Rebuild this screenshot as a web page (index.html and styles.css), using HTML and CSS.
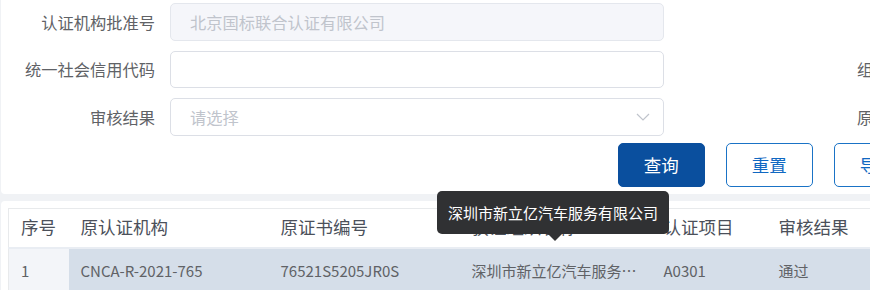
FILE: index.html
```html
<!DOCTYPE html>
<html lang="zh-CN">
<head>
    <meta charset="UTF-8">
    <meta name="viewport" content="width=device-width, initial-scale=1.0">
    <title>认证证书转换审核</title>
    <link rel="stylesheet" href="styles.css">
</head>
<body>
    <div class="page">
        <div class="search-card">
            <div class="form-row">
                <div class="field">
                    <label>认证机构批准号</label>
                    <input class="input" type="text" value="北京国标联合认证有限公司" disabled>
                </div>
            </div>
            <div class="form-row">
                <div class="field">
                    <label>统一社会信用代码</label>
                    <input class="input" type="text">
                </div>
                <div class="field">
                    <label>组织名称</label>
                    <input class="input" type="text">
                </div>
            </div>
            <div class="form-row">
                <div class="field">
                    <label>审核结果</label>
                    <div class="select">
                        <span class="placeholder">请选择</span>
                        <svg class="chevron" width="14" height="8" viewBox="0 0 14 8"><path d="M1 1 L7 7 L13 1" fill="none" stroke="#c0c4cc" stroke-width="1.2"/></svg>
                    </div>
                </div>
                <div class="field">
                    <label>原证书号</label>
                    <input class="input" type="text">
                </div>
            </div>
            <div class="btn-row">
                <button class="btn btn-primary">查询</button>
                <button class="btn btn-plain">重置</button>
                <button class="btn btn-plain">导出</button>
            </div>
        </div>

        <div class="table-card">
            <table class="data-table">
                <colgroup>
                    <col style="width: 60px">
                    <col style="width: 200px">
                    <col style="width: 191px">
                    <col style="width: 192px">
                    <col style="width: 115px">
                    <col style="width: 200px">
                </colgroup>
                <thead>
                    <tr>
                        <th>序号</th>
                        <th>原认证机构</th>
                        <th>原证书编号</th>
                        <th>获证组织名称</th>
                        <th>认证项目</th>
                        <th>审核结果</th>
                    </tr>
                </thead>
                <tbody>
                    <tr class="row-hover">
                        <td class="cell-index">1</td>
                        <td>CNCA-R-2021-765</td>
                        <td>76521S5205JR0S</td>
                        <td class="ellipsis">深圳市新立亿汽车服务有限公司</td>
                        <td>A0301</td>
                        <td>通过</td>
                    </tr>
                </tbody>
            </table>
            <div class="tooltip">深圳市新立亿汽车服务有限公司</div>
        </div>
    </div>
</body>
</html>
```

FILE: styles.css
```css
html, body { overflow: hidden; }
body { margin: 0; background-color: #f0f2f5; font-family: "Noto Sans CJK SC", "Noto Sans", sans-serif; color: #606266; }
.page { width: 1600px; padding-left: 1px; }

/* 查询条件 */
.search-card { background-color: #fff; padding: 3px 0 0; height: 191px; border-radius: 0 0 4px 4px; }
.form-row { display: flex; height: 37.5px; margin-bottom: 10px; }
.field { display: flex; flex: none; align-items: center; width: 767px; }
.field label { width: 154px; margin-right: 15px; text-align: right; font-size: 16.25px; line-height: 20px; color: #606266; }
.input {
    box-sizing: border-box; width: 494px; height: 37.5px; padding: 0 19px; border: 1px solid #dcdfe6; border-radius: 5px;
    font-family: inherit; font-size: 16.25px; color: #606266; background-color: #fff; outline: none;
}
.input:disabled { background-color: #f5f6fa; border-color: #e4e7ed; color: #c0c4cc; }
.select { box-sizing: border-box; width: 494px; height: 37.5px; padding: 0 13px 0 19px; border: 1px solid #dcdfe6; border-radius: 5px; display: flex; align-items: center; justify-content: space-between; }
.select .placeholder { font-size: 16.25px; color: #c0c4cc; }

.btn-row { display: flex; gap: 21.3px; margin-top: -2.2px; margin-left: 617px; }
.btn { box-sizing: border-box; width: 86.7px; height: 43.3px; border-radius: 5px; font-family: inherit; font-size: 17.5px; cursor: pointer; }
.btn-primary { background-color: #0a4f9e; border: 1px solid #0a4f9e; color: #fff; }
.btn-plain { background-color: #fff; border: 1px solid #1a73c6; color: #1068c2; }

/* 列表 */
.table-card { position: relative; margin-top: 7px; padding: 7px 0 0 7px; background-color: #fff; height: 120px; border-radius: 4px 4px 0 0; }
.data-table { table-layout: fixed; border-collapse: collapse; width: 958px; border-top: 1px solid #e8eaec; border-left: 1px solid #e8eaec; }
.data-table th { height: 35px; padding: 0 12px 3px; line-height: 22px; text-align: left; font-weight: normal; font-size: 17.5px; color: #4b505a; border-bottom: 2px solid #e9edf3; white-space: nowrap; }
.data-table td { height: 42px; padding: 0 12px; font-size: 15px; color: #606266; white-space: nowrap; }
.row-hover td { background-color: #d5dee9; }
.row-hover td.cell-index { background-color: #f3f5f9; }
.ellipsis { overflow: hidden; text-overflow: ellipsis; }

.tooltip {
    position: absolute; top: -10px; left: 436px; padding: 11px 11px; border-radius: 5px;
    background-color: #303133; color: #fff; font-size: 15px; line-height: 21px; white-space: nowrap;
}
.tooltip::after {
    content: ""; position: absolute; left: 111px; bottom: -7px;
    border-left: 7px solid transparent; border-right: 7px solid transparent; border-top: 7px solid #303133;
}
```
